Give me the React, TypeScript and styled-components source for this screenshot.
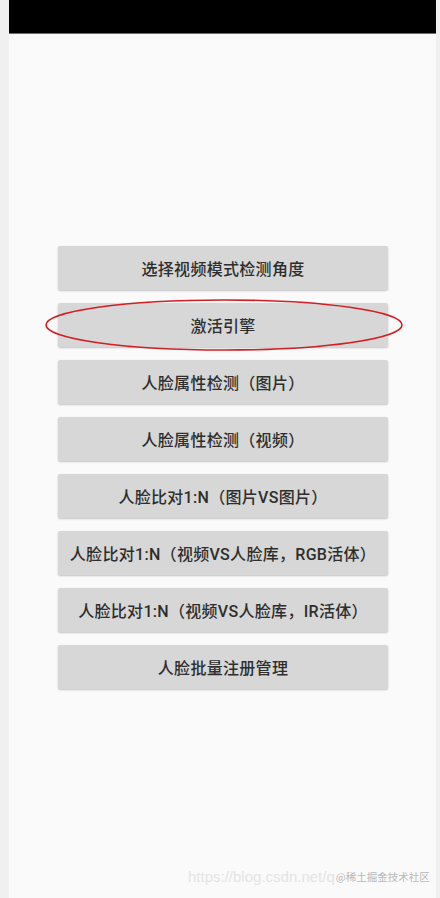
import React from "react";
import styled, { createGlobalStyle } from "styled-components";

const Global = createGlobalStyle`
  html, body { margin: 0; padding: 0; background: #f0f0f0; }
  body { font-family: Roboto, "Noto Sans CJK SC", "Noto Sans", sans-serif; }
`;

const Page = styled.div`
  display: flex;
  width: 440px;
  height: 898px;
  background: #f0f0f0;
  padding-left: 9px;
  padding-right: 4px;
  box-sizing: border-box;
`;

const Phone = styled.div`
  position: relative;
  flex: 1;
  display: flex;
  flex-direction: column;
  background: #fafafa;
`;

const StatusBar = styled.div`
  height: 33px;
  background: #000;
  border-bottom: 1px solid #6a6a6a;
  flex-shrink: 0;
`;

const List = styled.div`
  display: flex;
  flex-direction: column;
  align-items: center;
  gap: 13px;
  padding-top: 212px;
  padding-left: 1px;
`;

const Button = styled.div`
  position: relative;
  width: 330px;
  height: 44px;
  display: flex;
  align-items: center;
  justify-content: center;
  background: #d7d7d7;
  border-radius: 2px;
  box-shadow: 0 1px 2px rgba(0, 0, 0, 0.22);
  color: #2e2e2e;
  font-family: Roboto, "Noto Sans CJK SC", sans-serif;
  font-size: 16px;
  font-weight: 500;
  white-space: nowrap;
  letter-spacing: 0.3px;
`;

const Ring = styled.svg`
  position: absolute;
  left: -13px;
  top: -4px;
  overflow: visible;
  pointer-events: none;
`;

const Watermark = styled.div`
  position: absolute;
  left: 179px;
  top: 868px;
  display: flex;
  align-items: center;
  gap: 1px;
  white-space: nowrap;
`;

const Url = styled.span`
  font-family: "Liberation Sans", Arial, sans-serif;
  font-size: 15px;
  color: #e4e4e4;
`;

const Tag = styled.span`
  font-family: "Noto Sans CJK SC", sans-serif;
  font-size: 10.5px;
  color: #b8b8b8;
`;

const labels = [
  "选择视频模式检测角度",
  "激活引擎",
  "人脸属性检测（图片）",
  "人脸属性检测（视频）",
  "人脸比对1:N（图片VS图片）",
  "人脸比对1:N（视频VS人脸库，RGB活体）",
  "人脸比对1:N（视频VS人脸库，IR活体）",
  "人脸批量注册管理",
];

export default function App() {
  return (
    <>
      <Global />
      <Page>
        <Phone>
          <StatusBar />
          <List>
            {labels.map((l, i) => (
              <Button key={i}>
                {l}
                {i === 1 && (
                  <Ring width="358" height="52" viewBox="0 0 358 52">
                    <ellipse
                      cx="179"
                      cy="26"
                      rx="178"
                      ry="25"
                      fill="none"
                      stroke="#d21f24"
                      strokeWidth="1.6"
                    />
                  </Ring>
                )}
              </Button>
            ))}
          </List>
          <Watermark>
            <Url>https://blog.csdn.net/q</Url>
            <Tag>@稀土掘金技术社区</Tag>
          </Watermark>
        </Phone>
      </Page>
    </>
  );
}
